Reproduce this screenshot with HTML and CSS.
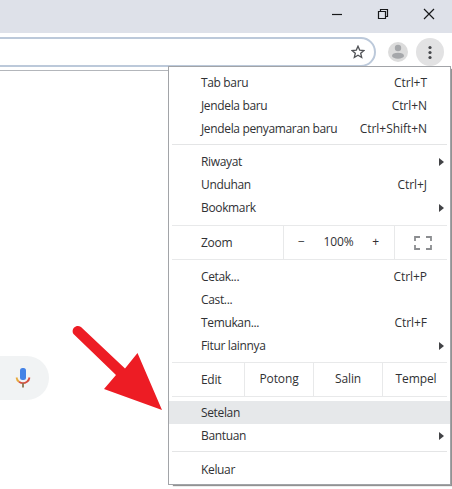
FILE: index.html
```
<!DOCTYPE html>
<html lang="id">
<head>
<meta charset="utf-8">
<title>Tab baru</title>
<link rel="stylesheet" href="styles.css">
</head>
<body>
<div class="window">
  <header class="titlebar">
    <svg class="win-btn" viewBox="0 0 12 12"><path d="M1 6.500h10"/></svg>
    <svg class="win-btn" viewBox="0 0 12 12"><path d="M1.500 3.500h7v7h-7zM3.500 3V1.500h7v7H9"/></svg>
    <svg class="win-btn close" viewBox="0 0 12 12"><path d="M1 1l10 10M11 1L1 11"/></svg>
  </header>
  <div class="toolbar">
    <div class="omnibox">
      <svg class="star" viewBox="0 0 14 14"><path d="M7 1.200l1.700 3.900 4.200.4-3.200 2.800 1 4.200L7 10.300l-3.700 2.200 1-4.200L1.100 5.500l4.200-.4z"/></svg>
    </div>
    <svg class="avatar" viewBox="0 0 20 20"><circle cx="10" cy="10" r="10" fill="#dcdcdc"/><circle cx="10" cy="6" r="3.200" fill="#a5a7aa"/><ellipse cx="10" cy="13.700" rx="6" ry="3" fill="#a5a7aa"/></svg>
    <svg class="more" viewBox="0 0 28 28"><circle cx="14" cy="14" r="14" fill="#e2e2e3"/><g fill="#45474a"><circle cx="14" cy="9.500" r="1.600"/><circle cx="14" cy="14.500" r="1.600"/><circle cx="14" cy="19.500" r="1.600"/></g></svg>
  </div>
  <main class="page">
    <div class="search-end">
      <svg class="mic" viewBox="0 0 16 22"><rect x="5" y="1" width="6" height="12" rx="2.500" fill="#4583e6"/><path d="M1.500 10.500c.3 2 1 3.300 2.500 4.200" stroke="#e7a93c"/><path d="M4 14.700c2.500 1.700 5.500 1.700 8 0 1.300-.9 2.200-2.200 2.500-4.200" stroke="#d5503f"/><path d="M8 16v4.500" stroke="#8b7650"/></svg>
    </div>
    <svg class="arrow" viewBox="0 0 92 88"><path d="M2.500 9C-.6 4.500 5-1.300 10 2.100L54 43.500 66.500 28 91 85 33 64 45 50Z"/></svg>
  </main>
  <nav class="menu">
    <div class="item"><span>Tab baru</span><kbd>Ctrl+T</kbd></div>
    <div class="item"><span>Jendela baru</span><kbd>Ctrl+N</kbd></div>
    <div class="item"><span>Jendela penyamaran baru</span><kbd>Ctrl+Shift+N</kbd></div>
    <hr>
    <div class="item sub"><span>Riwayat</span></div>
    <div class="item"><span>Unduhan</span><kbd>Ctrl+J</kbd></div>
    <div class="item sub"><span>Bookmark</span></div>
    <div class="controls zoom">
      <span class="label">Zoom</span>
      <div class="stepper"><span>−</span><span class="value">100%</span><span>+</span></div>
      <div class="full"><svg viewBox="0 0 18 14"><path d="M1 5V1h5M12 1h5v4M17 9v4h-5M6 13H1V9"/></svg></div>
    </div>
    <div class="item"><span>Cetak...</span><kbd>Ctrl+P</kbd></div>
    <div class="item"><span>Cast...</span></div>
    <div class="item"><span>Temukan...</span><kbd>Ctrl+F</kbd></div>
    <div class="item sub"><span>Fitur lainnya</span></div>
    <div class="controls edit">
      <span class="label">Edit</span><span class="action">Potong</span><span class="action">Salin</span><span class="action last">Tempel</span>
    </div>
    <div class="item active"><span>Setelan</span></div>
    <div class="item sub"><span>Bantuan</span></div>
    <hr>
    <div class="item exit"><span>Keluar</span></div>
  </nav>
</div>
</body>
</html>
```
FILE: styles.css
```
* { box-sizing: border-box; }
body { margin: 0; background: #fff; }
.window {
  position: relative;
  width: 452px;
  height: 489px;
  overflow: hidden;
  font: 12px/23px "Open Sans", "Noto Sans", sans-serif;
  letter-spacing: -0.1px;
  color: #303134;
}
.titlebar {
  display: flex;
  justify-content: flex-end;
  gap: 34px;
  height: 33px;
  padding: 8px 17px 0 0;
  background: #dee1e9;
}
.win-btn { width: 12px; height: 12px; fill: none; stroke: #17181a; stroke-width: 1.200; }
.toolbar {
  display: flex;
  align-items: center;
  height: 38px;
  padding: 0 8px 0 0;
  border-bottom: 1px solid #b3b6bb;
}
.omnibox {
  display: flex;
  align-items: center;
  justify-content: flex-end;
  width: 378px;
  height: 30px;
  margin-left: -2px;
  padding-right: 9px;
  border: 2px solid #bcc9da;
  border-radius: 0 15px 15px 0;
}
.star { width: 14px; height: 14px; fill: none; stroke: #505256; stroke-width: 1.300; }
.avatar { width: 20px; height: 20px; margin-left: 12px; }
.more { width: 28px; height: 28px; margin-left: 8px; }
.page { height: 418px; padding-top: 285px; }
.search-end {
  display: flex;
  align-items: center;
  justify-content: flex-end;
  width: 49px;
  height: 44px;
  padding-right: 18px;
  border-radius: 0 22px 22px 0;
  background: #f1f3f4;
}
.mic { width: 16px; height: 22px; fill: none; stroke-width: 1.800; }
.arrow { position: absolute; left: 71px; top: 325px; width: 92px; height: 88px; fill: #ed1c24; }
.menu {
  position: absolute;
  left: 168px;
  top: 66px;
  width: 283px;
  height: 419px;
  padding-top: 4px;
  border: 1px solid #a2a4a8;
  background: #fff;
  box-shadow: 4px 2px 1px -1px #929292;
}
.item {
  display: flex;
  justify-content: space-between;
  height: 23px;
  padding: 0 23px 0 32px;
  letter-spacing: -0.35px;
  white-space: nowrap;
}
.item.active { background: #e6e8ea; }
.item.exit { padding-top: 1px; }
kbd { font: inherit; letter-spacing: -0.05px; }
.sub { align-items: center; padding-right: 6px; }
.sub::after {
  content: "";
  border: solid transparent;
  border-width: 4px 0 4px 5px;
  border-left-color: #424346;
}
hr { height: 1px; margin: 4px 3px 5px; border: 0; background: #e4e5e6; }
.controls {
  display: flex;
  height: 35px;
  margin: 6px 3px 5px;
  border: solid #e8e9ea;
  border-width: 1px 0;
  line-height: 34px;
}
.label { padding-left: 29px; letter-spacing: -0.3px; }
.zoom .label { width: 111px; }
.stepper {
  display: flex;
  width: 112px;
  justify-content: space-between;
  padding: 0 15px 0 14px;
  border: solid #e8e9ea;
  border-width: 0 1px;
  line-height: 32px;
}
.full { display: flex; flex: 1; align-items: center; justify-content: center; padding-left: 3px; }
.full svg { width: 18px; height: 14px; fill: none; stroke: #8b8d90; stroke-width: 1.800; }
.edit { margin: 5px 3px 4px; }
.edit .label { width: 72px; }
.action { width: 69px; border-left: 1px solid #e8e9ea; text-align: center; line-height: 32px; }
.action.last { flex: 1; padding-left: 2px; }
```
